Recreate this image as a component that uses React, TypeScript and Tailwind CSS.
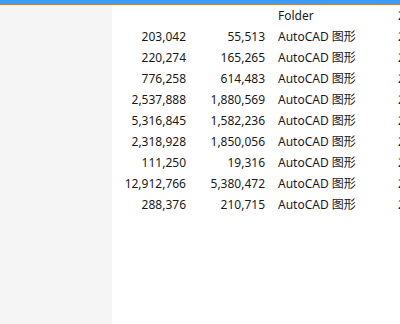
const ROWS: [string, string][] = [
  ['203,042', '55,513'],
  ['220,274', '165,265'],
  ['776,258', '614,483'],
  ['2,537,888', '1,880,569'],
  ['5,316,845', '1,582,236'],
  ['2,318,928', '1,850,056'],
  ['111,250', '19,316'],
  ['12,912,766', '5,380,472'],
  ['288,376', '210,715'],
];

function Row({ a, b, type }: { a: string; b: string; type: string }) {
  return (
    <div className="flex h-[21px] items-center whitespace-nowrap">
      <div className="w-[80px] shrink-0 pr-[6px] text-right">{a}</div>
      <div className="w-[79px] shrink-0 pr-[6px] text-right">{b}</div>
      <div className="w-[127px] shrink-0 pl-[7px]">{type}</div>
      <div className="shrink-0">2</div>
    </div>
  );
}

export default function App() {
  return (
    <div
      className="flex h-[324px] w-[400px] flex-col overflow-hidden bg-white text-[12px] text-[#1a1a1a]"
      style={{ fontFamily: '"Noto Sans", "Noto Sans CJK SC", sans-serif' }}
    >
      <div className="h-[4px] shrink-0 bg-[#3c9cf6]" />
      <div className="h-[1px] shrink-0 bg-[repeating-linear-gradient(90deg,#f0801e_0px,#f0801e_1px,#3c9cf6_1px,#3c9cf6_2px)]" />
      <div className="flex min-h-0 flex-1">
        <div className="w-[112px] shrink-0 bg-[#f5f5f5]" />
        <div className="min-w-0 flex-1 overflow-hidden">
          <Row a="" b="" type="Folder" />
          {ROWS.map(([a, b]) => (
            <Row key={a} a={a} b={b} type="AutoCAD 图形" />
          ))}
        </div>
      </div>
    </div>
  );
}
